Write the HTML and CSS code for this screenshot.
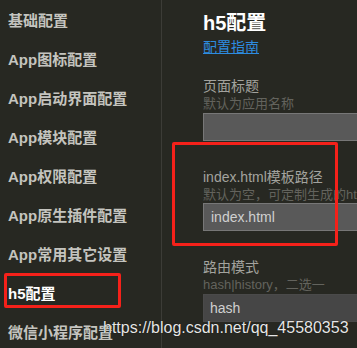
FILE: index.html
```html
<!DOCTYPE html>
<html lang="zh-CN">
<head>
    <meta charset="UTF-8">
    <title>h5配置</title>
    <link rel="stylesheet" href="styles.css">
</head>
<body>
    <div class="page">
        <!-- Sidebar -->
        <div class="sidebar">
            <div class="menu-item">基础配置</div>
            <div class="menu-item">App图标配置</div>
            <div class="menu-item">App启动界面配置</div>
            <div class="menu-item">App模块配置</div>
            <div class="menu-item">App权限配置</div>
            <div class="menu-item">App原生插件配置</div>
            <div class="menu-item">App常用其它设置</div>
            <div class="menu-item active">h5配置</div>
            <div class="menu-item">微信小程序配置</div>
        </div>

        <!-- Main panel -->
        <div class="content">
            <h1 class="title">h5配置</h1>
            <a href="#" class="guide-link">配置指南</a>

            <div class="field first">
                <div class="field-label">页面标题</div>
                <div class="field-hint">默认为应用名称</div>
                <div class="field-input"></div>
            </div>

            <div class="field">
                <div class="field-label">index.html模板路径</div>
                <div class="field-hint">默认为空，可定制生成的htm</div>
                <div class="field-input">index.html</div>
            </div>

            <div class="field">
                <div class="field-label">路由模式</div>
                <div class="field-hint">hash|history，二选一</div>
                <div class="field-input dark">hash</div>
            </div>
        </div>
    </div>

    <!-- annotations -->
    <div class="mark mark-menu"></div>
    <div class="mark mark-field"></div>
    <div class="watermark">https://blog.csdn.net/qq_45580353</div>
</body>
</html>
```

FILE: styles.css
```css
/* General */
body {
    margin: 0;
    background-color: #272822;
    font-family: 'Liberation Sans', 'Noto Sans CJK SC', sans-serif;
    overflow: hidden;
    position: relative;
    height: 348px;
}

.page {
    display: flex;
    height: 348px;
}

/* Sidebar */
.sidebar {
    width: 162px;
    flex-shrink: 0;
    border-right: 1px solid #3c3c37;
    box-sizing: border-box;
    padding-top: 1px;
}

.menu-item {
    height: 39px;
    line-height: 39px;
    padding-left: 8px;
    font-size: 15px;
    font-weight: bold;
    color: #c4c4bf;
    white-space: nowrap;
}

.menu-item.active {
    color: #ffffff;
}

/* Content */
.content {
    padding-left: 41px;
    flex: 1;
    min-width: 0;
}

.title {
    margin: 9px 0 0;
    font-size: 20px;
    line-height: 28px;
    font-weight: bold;
    color: #ffffff;
}

.guide-link {
    display: inline-block;
    font-size: 14px;
    line-height: 20px;
    color: #2d8ce0;
    text-decoration: underline;
}

.field {
    margin-top: 28px;
}

.field.first {
    margin-top: 21px;
}

.field-label {
    font-size: 14px;
    line-height: 17px;
    color: #a3a39e;
    white-space: nowrap;
}

.field-hint {
    font-size: 13px;
    line-height: 17px;
    color: #63635d;
    white-space: nowrap;
}

.field-input {
    margin-top: 0.5px;
    width: 220px;
    height: 28px;
    box-sizing: border-box;
    border: 1px solid #777777;
    background-color: #595959;
    color: #d0d0d0;
    font-size: 14px;
    line-height: 26px;
    padding-left: 7px;
}

.field-input.dark {
    background-color: #464646;
    border-color: #4a4a4a;
    padding-left: 6px;
}

/* Red annotation boxes */
.mark {
    position: absolute;
    border: 3px solid #f5211a;
    border-radius: 2px;
    box-sizing: border-box;
}

.mark-menu {
    left: 4px;
    top: 273px;
    width: 117px;
    height: 35px;
}

.mark-field {
    left: 172px;
    top: 142px;
    width: 166px;
    height: 104px;
}

.watermark {
    position: absolute;
    left: 103px;
    top: 318px;
    font-size: 16px;
    line-height: 19px;
    color: #e6e6e6;
    text-shadow: 0 0 1px #000;
    white-space: nowrap;
}
```
